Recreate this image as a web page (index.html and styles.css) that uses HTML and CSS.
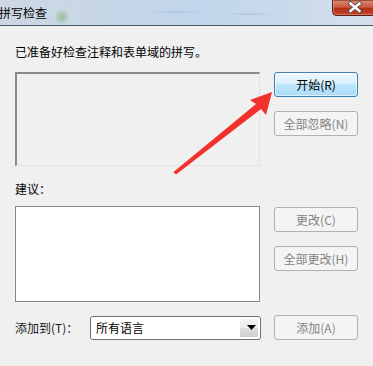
FILE: index.html
```html
<!DOCTYPE html>
<html lang="zh-CN">
<head>
<meta charset="utf-8">
<title>拼写检查</title>
<link rel="stylesheet" href="styles.css">
</head>
<body>
<div class="window">
  <div class="titlebar">
    <span class="title">拼写检查</span>
    <svg class="close" width="43" height="16" viewBox="0 0 43 16">
      <defs>
        <linearGradient id="cg" x1="0" y1="0" x2="0" y2="1">
          <stop offset="0" stop-color="#dc8a76"/>
          <stop offset="0.45" stop-color="#cc5a42"/>
          <stop offset="0.55" stop-color="#b22f16"/>
          <stop offset="1" stop-color="#c74a2f"/>
        </linearGradient>
      </defs>
      <path d="M0.5 0 V11.5 Q0.5 15.5 4.5 15.5 H43 V0 Z" fill="url(#cg)" stroke="#5a1e15" stroke-width="1"/>
      <path d="M1.5 0 V11.5 Q1.5 14.5 4.5 14.5 H43" fill="none" stroke="#e9a898" stroke-opacity="0.5" stroke-width="1"/>
      <path d="M18.5 3.5 L27.5 11 M27.5 3.5 L18.5 11" stroke="#4a4a4a" stroke-width="4" stroke-linecap="square"/>
      <path d="M18.5 3.5 L27.5 11 M27.5 3.5 L18.5 11" stroke="#ffffff" stroke-width="2.4" stroke-linecap="square"/>
    </svg>
  </div>
  <div class="content">
    <p class="msg">已准备好检查注释和表单域的拼写。</p>
    <div class="row row1">
      <div class="box sunken"></div>
      <div class="buttons">
        <button class="btn primary">开始(R)</button>
        <button class="btn disabled">全部忽略(N)</button>
      </div>
    </div>
    <p class="label suggest">建议：</p>
    <div class="row row2">
      <div class="box list"></div>
      <div class="buttons buttons2">
        <button class="btn disabled">更改(C)</button>
        <button class="btn disabled">全部更改(H)</button>
      </div>
    </div>
    <div class="row row3">
      <span class="label addto">添加到(T)：</span>
      <div class="select">
        <span class="select-text">所有语言</span>
        <span class="select-arrow"><svg width="9" height="5" viewBox="0 0 9 5"><path d="M0 0 H9 L4.5 5 Z" fill="#000"/></svg></span>
      </div>
      <button class="btn disabled">添加(A)</button>
    </div>
  </div>
  <svg class="arrow" width="373" height="366" viewBox="0 0 373 366">
    <path d="M173.5 172 L176 174.5 L261 109 L266 115 L272 92 L250 100 L256 104 Z" fill="#f2312c"/>
  </svg>
</div>
</body>
</html>
```

FILE: styles.css
```css
* { box-sizing: border-box; }
html, body {
  margin: 0;
  padding: 0;
  width: 373px;
  height: 366px;
  overflow: hidden;
  background: #f0f0f0;
  font-family: "Noto Sans CJK SC", "Microsoft YaHei", sans-serif;
  font-size: 12px;
  color: #000;
}
.window {
  position: relative;
  width: 373px;
  height: 366px;
  background: #f0f0f0;
}
.titlebar {
  height: 26px;
  display: flex;
  align-items: flex-start;
  justify-content: space-between;
  border-bottom: 1px solid #4b5868;
  background:
    radial-gradient(circle at 62px 17px, rgba(110,170,90,0.55) 0, rgba(110,170,90,0) 8px),
    radial-gradient(ellipse at 175px 12px, rgba(150,190,225,0.5) 0, rgba(150,190,225,0) 30px),
    radial-gradient(ellipse at 250px 14px, rgba(120,150,175,0.35) 0, rgba(120,150,175,0) 25px),
    linear-gradient(90deg, #cdd7e2 0, #c6d6e7 30%, #c1d6eb 55%, #cbdaeb 80%, #d5e0ec 100%);
}
.title {
  font-size: 12px;
  line-height: 16px;
  padding-top: 5px;
  margin-left: -1px;
  color: #000;
}
.close {
  display: block;
  flex: none;
  margin-right: -2px;
}
.content {
  padding: 0 15px;
}
.msg {
  margin: 18px 0 0;
  line-height: 16px;
}
.row {
  display: flex;
  gap: 14px;
  align-items: flex-start;
}
.row1 { margin-top: 12px; }
.box {
  width: 245px;
}
.sunken {
  height: 94px;
  background: #f0f0f0;
  border-top: 2px solid #8a8a8a;
  border-left: 2px solid #8a8a8a;
  border-right: 1px solid #e2e2e2;
  border-bottom: 1px solid #e2e2e2;
}
.buttons {
  display: flex;
  flex-direction: column;
  gap: 14px;
}
.buttons2 { margin-top: 1px; }
.btn {
  width: 84px;
  height: 25px;
  padding: 0;
  border-radius: 3px;
  font-family: inherit;
  font-size: 12px;
  line-height: 16px;
}
.primary {
  color: #000;
  border: 1px solid #3c7fb1;
  background: linear-gradient(180deg, #eef8fe 0, #dbf0fc 45%, #bee6fd 50%, #a9dbf6 100%);
  box-shadow: inset 0 0 0 1px rgba(255,255,255,0.6);
}
.disabled {
  color: #838383;
  border: 1px solid #adb2b5;
  background: #f4f4f4;
}
.label {
  margin: 0;
  line-height: 16px;
}
.suggest { margin-top: 15px; }
.row2 { margin-top: 9px; }
.list {
  height: 96px;
  background: #fff;
  border: 1px solid #828790;
}
.row3 {
  margin-top: 13px;
  gap: 0;
  align-items: center;
}
.addto {
  width: 75px;
  color: #1a1a1a;
}
.select {
  width: 171px;
  height: 24px;
  border: 1px solid #707070;
  border-radius: 3px;
  background: #fff;
  display: flex;
  align-items: stretch;
  padding: 2px;
  margin-right: 13px;
}
.select-text {
  flex: 1;
  line-height: 18px;
  padding-left: 3px;
  background: #fff;
}
.select-arrow {
  width: 18px;
  display: flex;
  align-items: center;
  justify-content: center;
  background: linear-gradient(180deg, #f2f2f2 0, #ebebeb 50%, #dddddd 51%, #cfcfcf 100%);
}
.select-arrow svg { display: block; margin-left: 4px; }
.arrow {
  position: absolute;
  left: 0;
  top: 0;
  pointer-events: none;
}
```
